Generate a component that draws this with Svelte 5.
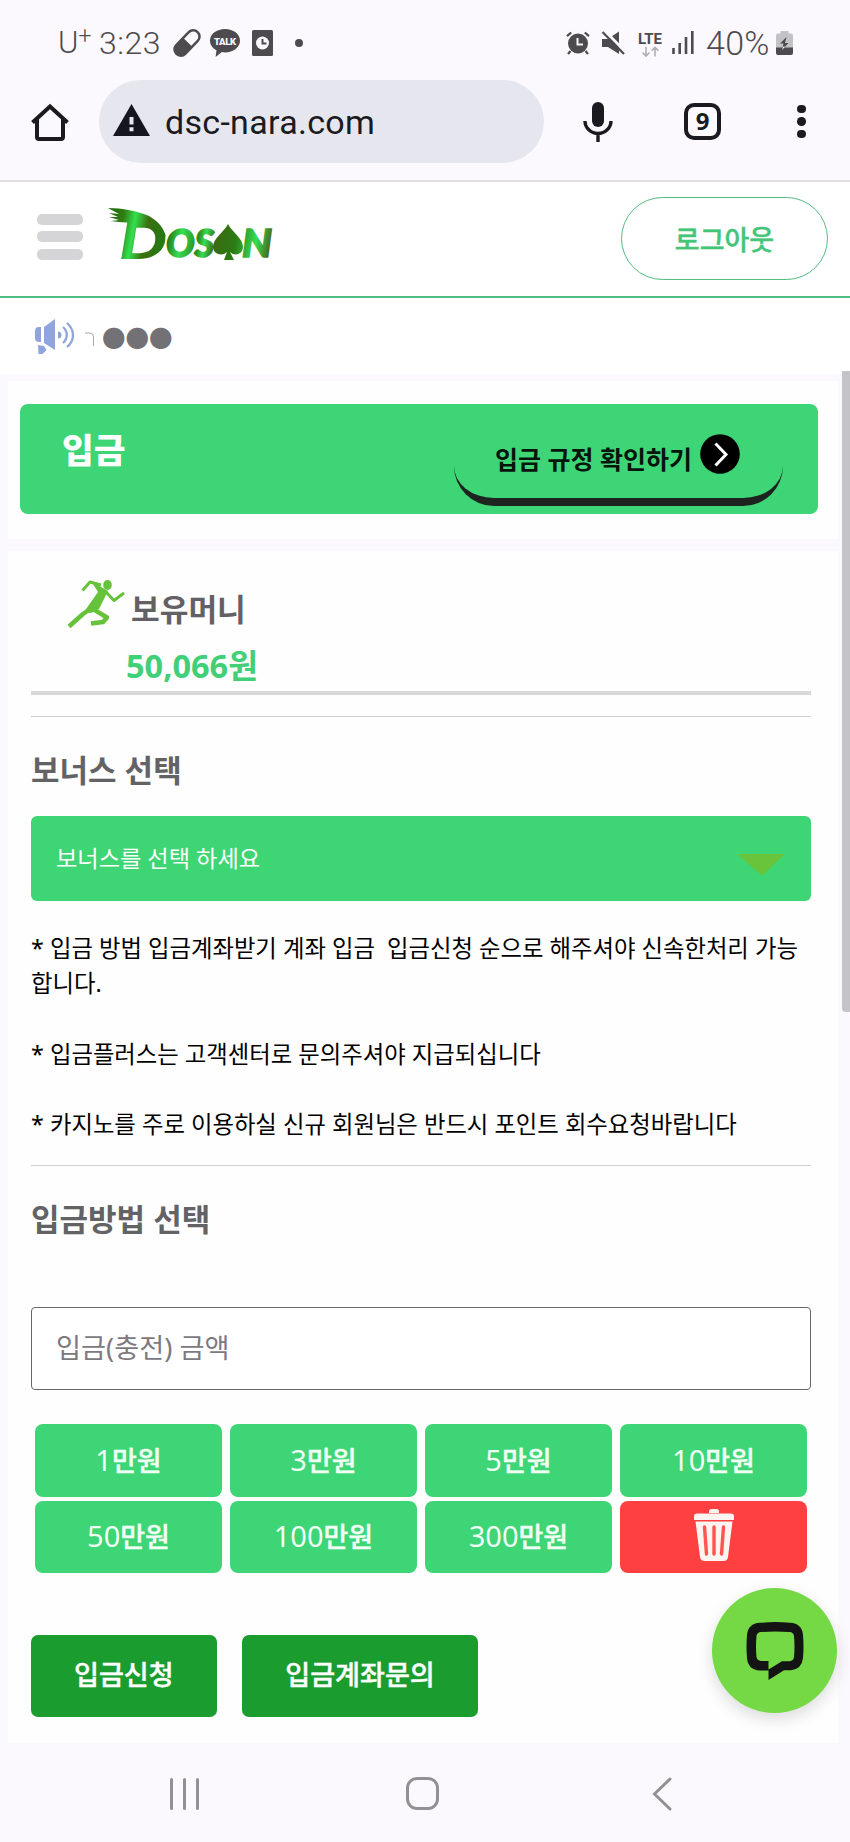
<script>
    const amounts = [
        { num: '1', unit: '만원' },
        { num: '3', unit: '만원' },
        { num: '5', unit: '만원' },
        { num: '10', unit: '만원' },
        { num: '50', unit: '만원' },
        { num: '100', unit: '만원' },
        { num: '300', unit: '만원' }
    ];

    let amount = '';
</script>

<div class="screen">
    <!-- 상태 표시줄 -->
    <div class="status-bar">
        <div class="status-left">
            <span class="carrier">U<sup>+</sup></span>
            <span class="clock">3:23</span>
            <svg class="pill" width="28" height="28" viewBox="0 0 28 28">
                <g transform="rotate(-46 14 14)">
                    <rect x="-2.500" y="6.500" width="33" height="15" rx="7.500" fill="#4d4b4e" />
                    <path d="M15 9h8a5 5 0 0 1 0 10H15z" fill="#fbf9fd" />
                </g>
            </svg>
            <svg class="talk" width="30" height="28" viewBox="0 0 30 28">
                <path
                    d="M15 0C6.700 0 0 5 0 11.700c0 4.200 2.700 7.500 6.500 9.600L5.600 28l6.300-4.900c1 .2 2 .3 3.100.3 8.300 0 15-5.100 15-11.700S23.300 0 15 0z"
                    fill="#4d4b4e"
                />
                <text x="4" y="15.600" font-size="9.500" font-weight="900" textLength="22" fill="#fbf9fd">TALK</text>
            </svg>
            <svg class="clock-card" width="21" height="26" viewBox="0 0 21 26">
                <rect width="21" height="26" rx="1.500" fill="#4d4b4e" />
                <circle cx="10.500" cy="13" r="6.500" fill="#fbf9fd" />
                <path d="M10.500 9v4.500h4" fill="none" stroke="#4d4b4e" stroke-width="2" />
            </svg>
            <i class="more-dot"></i>
        </div>
        <div class="status-right">
            <svg width="24" height="24" viewBox="0 0 24 24">
                <circle cx="12" cy="12.500" r="10" fill="#4d4b4e" />
                <path
                    d="M1 5.200L5.200 1.500M23 5.200l-4.200-3.700M4.500 20L2 23M19.500 20l2.500 3"
                    stroke="#4d4b4e"
                    stroke-width="2.200"
                />
                <path d="M11.500 7v6.500h5.500" fill="none" stroke="#fbf9fd" stroke-width="2" />
            </svg>
            <svg class="mute" width="24" height="24" viewBox="0 0 24 24">
                <path d="M1 8h6l11-7.500v22.500L7 16H1z" fill="#4d4b4e" />
                <path d="M3.500 -.5L25 21.500" stroke="#fbf9fd" stroke-width="3" />
                <path d="M1.500 1L23 23" stroke="#4d4b4e" stroke-width="2.200" />
            </svg>
            <svg class="lte" width="25" height="32" viewBox="0 -5 25 32">
                <text x="0" y="11.500" font-size="15" font-weight="700" textLength="24" fill="#4d4b4e">LTE</text>
                <path
                    d="M8 15v9M4.500 20.500L8 24l3.500-3.500M17 24.500v-9M13.500 18.800L17 15.300l3.500 3.500"
                    fill="none"
                    stroke="#b0afb2"
                    stroke-width="1.600"
                />
            </svg>
            <svg class="signal" width="22" height="23" viewBox="0 0 22 23">
                <path d="M1.500 17v6M7.700 12v11M14 6v17M20.300 0v23" stroke="#4d4b4e" stroke-width="2.600" />
            </svg>
            <span class="battery-text">40%</span>
            <svg class="battery" width="17" height="24" viewBox="0 0 17 24">
                <path d="M4.500 0h8v2.500H15a2 2 0 0 1 2 2V17H0V4.500a2 2 0 0 1 2-2h2.500z" fill="#c3c2c5" />
                <path d="M0 16.500h17V22a2 2 0 0 1-2 2H2a2 2 0 0 1-2-2z" fill="#4d4b4e" />
                <path d="M10.500 6L4 12.500h3.500L6 19l6.500-7H9z" fill="#4d4b4e" />
                <path d="M7.300 15.500L6 19l3-3.300z" fill="#fbf9fd" />
            </svg>
        </div>
    </div>

    <!-- 주소창 -->
    <div class="toolbar">
        <svg class="home" width="38" height="38" viewBox="0 0 38 38">
            <path
                d="M1.500 19.500L19 3.500l17.500 16M6 16.500V34a2 2 0 0 0 2 2h22a2 2 0 0 0 2-2V16.500"
                fill="none"
                stroke="#1b1a20"
                stroke-width="4"
            />
        </svg>
        <div class="address">
            <svg width="37" height="32" viewBox="0 0 37 32">
                <path d="M18.500 0L37 32H0z" fill="#15161f" />
                <path d="M18.500 13v7.500M18.500 23.300v4" stroke="#e6e6ee" stroke-width="4" />
            </svg>
            <span>dsc-nara.com</span>
        </div>
        <svg class="mic" width="30" height="40" viewBox="0 0 30 40">
            <rect x="9" y="0" width="12" height="25" rx="6" fill="#1b1a20" />
            <path d="M2 19a13 12.500 0 0 0 26 0M15 31v9" fill="none" stroke="#1b1a20" stroke-width="3.400" />
        </svg>
        <div class="tabs">9</div>
        <div class="menu-dots"><i></i><i></i><i></i></div>
    </div>

    <!-- 사이트 헤더 -->
    <header class="site-header">
        <div class="hamburger"><i></i><i></i><i></i></div>
        <svg class="logo" width="170" height="72" viewBox="0 -8 170 72">
            <defs>
                <linearGradient id="dosan" x1="0" y1="0" x2="166" y2="30" gradientUnits="userSpaceOnUse">
                    <stop offset="0" stop-color="#1e6b12" />
                    <stop offset="0.1" stop-color="#2f7d12" />
                    <stop offset="0.17" stop-color="#33e04e" />
                    <stop offset="0.25" stop-color="#3a7010" />
                    <stop offset="0.38" stop-color="#227a14" />
                    <stop offset="0.46" stop-color="#37dd55" />
                    <stop offset="0.56" stop-color="#2c8a1c" />
                    <stop offset="0.6" stop-color="#37dd55" />
                    <stop offset="0.66" stop-color="#3c6a12" />
                    <stop offset="0.78" stop-color="#2a7c14" />
                    <stop offset="0.9" stop-color="#37dd55" />
                    <stop offset="1" stop-color="#4a5a14" />
                </linearGradient>
            </defs>
            <g fill="url(#dosan)" font-weight="900" font-style="italic">
                <text class="logo-text" x="11" y="52" font-size="52" textLength="48" lengthAdjust="spacingAndGlyphs">D</text>
                <g stroke="url(#dosan)" stroke-width="1.600">
                    <text class="logo-text" x="58" y="49.500" font-size="38" textLength="48" lengthAdjust="spacingAndGlyphs">OS</text>
                    <text class="logo-text" x="134" y="49.500" font-size="37" textLength="30" lengthAdjust="spacingAndGlyphs">N</text>
                </g>
                <path d="M0 1c14 0 30 3 41 8 9 5 15 12 17 21-6-7-14-10-25-13-10-2-20-1-30-3l8-1-10-3 9 0-9-4 10 1z" />
                <path
                    d="M120 17c4 8 15 14 15 23 0 7-8 10-13 5l4 8h-10l3-8c-5 5-14 2-14-5 0-9 11-15 15-23z"
                />
            </g>
        </svg>
        <button class="logout">로그아웃</button>
    </header>

    <!-- 공지 -->
    <div class="notice">
        <svg width="40" height="38" viewBox="0 0 40 38" fill="#8fa5dc">
            <path d="M5 9h2v15H5a4 4 0 0 1-4-4v-7a4 4 0 0 1 4-4z" />
            <path d="M10 9l11-8v31l-11-7z" />
            <path d="M4 27l6 1 2.500 4-4 4H4.500z" />
            <path d="M24 13.500a3.500 3.500 0 0 1 0 7z" />
            <g fill="none" stroke="#8fa5dc" stroke-width="2.300">
                <path d="M29 9c5 4.500 5 11.500 0 16" />
                <path d="M33 5c8 7 8 17.500 0 24" />
            </g>
        </svg>
        <svg class="cut" width="10" height="16" viewBox="0 0 10 16">
            <path d="M0 2h5q3.500 0 3.500 4v9" fill="none" stroke="#a9a7ab" stroke-width="1" />
        </svg>
        <span class="bullets">●●●</span>
    </div>

    <main class="content">
        <section class="card banner-card">
            <div class="banner">
                <h1>입금</h1>
                <button class="rules">
                    <span>입금 규정 확인하기</span>
                    <svg width="40" height="40" viewBox="0 0 40 40">
                        <circle cx="20" cy="20" r="19.800" />
                        <path d="M15.500 9.500L26 20.500 15.500 31.500" fill="none" stroke="#fff" stroke-width="3" />
                    </svg>
                </button>
            </div>
        </section>

        <section class="card form-card">
            <div class="money">
                <svg width="58" height="48" viewBox="0 0 58 48">
                    <g fill="none" stroke="#66c23a" stroke-linejoin="round">
                        <path d="M33 5L22 2 14.500 10.500" stroke-width="3" />
                        <path d="M38 12l8 8.500L56 13" stroke-width="3" />
                        <path d="M25 27L15 34 1 46.500" stroke-width="4.500" />
                        <path d="M25 29l14 8.500-4 4.500-12 1.500" stroke-width="4.500" />
                    </g>
                    <path d="M23 1l17 10-9 18-8 4-7-1 14-20z" fill="#66c23a" />
                    <ellipse cx="39.500" cy="5" rx="4.300" ry="5" fill="#66c23a" />
                </svg>
                <strong>보유머니</strong>
            </div>
            <div class="balance">50,066원</div>
            <hr class="thick" />
            <hr />

            <h2 class="bonus-title">보너스 선택</h2>
            <div class="select">
                <span>보너스를 선택 하세요</span>
                <svg width="48" height="21" viewBox="0 0 48 21">
                    <path d="M0 0h48L28 19q-3 3-6 0z" fill="#69c33b" />
                </svg>
            </div>

            <p class="guide">
                * 입금 방법 입금계좌받기 계좌 입금&nbsp; 입금신청 순으로 해주셔야 신속한처리 가능합니다.<br /><br />
                * 입금플러스는 고객센터로 문의주셔야 지급되십니다<br /><br />
                * 카지노를 주로 이용하실 신규 회원님은 반드시 포인트 회수요청바랍니다
            </p>
            <hr class="guide-line" />

            <h2 class="method-title">입금방법 선택</h2>
            <input class="amount" placeholder="입금(충전) 금액" bind:value={amount} />

            <div class="quick">
                {#each amounts as item}
                    <button><span>{item.num}</span>{item.unit}</button>
                {/each}
                <button class="clear" aria-label="삭제">
                    <svg width="42" height="52" viewBox="0 0 42 52" fill="#fdf3f1">
                        <path d="M16 4V2.500Q16 0 18.500 0h5Q26 0 26 2.500V4z" />
                        <path d="M4 4.500h34q3 0 3 3V11H1V7.500q0-3 3-3z" />
                        <path d="M2.500 12.500h37L35 48q-.5 4-4.500 4h-19Q7.500 52 7 48z" />
                        <path
                            d="M11.500 18l2 27M21 18v27M30.500 18l-2 27"
                            stroke="#ff5450"
                            stroke-width="3.400"
                            stroke-linecap="round"
                        />
                    </svg>
                </button>
            </div>

            <div class="actions">
                <button>입금신청</button>
                <button>입금계좌문의</button>
            </div>
        </section>
    </main>

    <!-- 하단 내비게이션 -->
    <nav class="nav-bar">
        <svg width="31" height="32" viewBox="0 0 31 32">
            <path d="M2.500 1.500v29M15.500 1.500v29M28.500 1.500v29" />
        </svg>
        <svg class="nav-home" width="33" height="33" viewBox="0 0 33 33">
            <rect x="1.500" y="1.500" width="30" height="30" rx="9.500" />
        </svg>
        <svg width="20" height="34" viewBox="0 0 20 34">
            <path d="M18 2L2.500 17 18 32" />
        </svg>
    </nav>

    <div class="scrollbar"></div>
    <button class="chat" aria-label="채팅">
        <svg width="58" height="58" viewBox="0 0 58 58">
            <path
                fill-rule="evenodd"
                d="M14 .8Q29-.6 44 .8 56 1.500 57 13q1 12 0 23-1.200 11-12 12.200H38L22.500 58V48.500H14Q2 48 1 36q-1-11 0-23Q2 1.500 14 .8zM15 10q-4 .3-4.500 4-1 11 0 21 .5 3.500 4.500 4h7.500v8.500L36 39.200h7.500q4-.4 4.500-4.200 1-10 0-21-.5-3.700-4.500-4-14-1-28.500 0z"
                fill="#141414"
            />
        </svg>
    </button>
</div>

<style>
    :global(body) {
        margin: 0;
        background: #fbf9fd;
    }

    .screen {
        position: relative;
        width: 850px;
        height: 1842px;
        overflow: hidden;
        background: #fbf9fd;
        font-family: 'Noto Sans', 'Noto Sans CJK KR', sans-serif;
        color: #000;
    }

    button {
        border: 0;
        padding: 0;
        background: none;
        font-family: inherit;
    }

    svg {
        display: block;
        flex-shrink: 0;
        overflow: visible;
    }

    /* 상태 표시줄 */
    .status-bar {
        display: flex;
        justify-content: space-between;
        height: 80px;
        padding: 5px 57px 0 58px;
        box-sizing: border-box;
        font-family: Roboto, sans-serif;
        font-weight: 300;
        font-size: 31px;
        color: #4d4b4e;
    }

    .status-left,
    .status-right {
        display: flex;
        align-items: center;
    }

    .carrier {
        width: 41px;
        line-height: 36px;
    }

    .carrier sup {
        font-size: 23px;
        line-height: 0;
        vertical-align: 9px;
    }

    .clock {
        width: 63px;
        font-size: 32px;
        letter-spacing: 0.5px;
    }

    .pill {
        margin-left: 11px;
    }

    .talk {
        margin-left: 9px;
    }

    .clock-card {
        margin-left: 12px;
    }

    .more-dot {
        width: 8px;
        height: 8px;
        margin-left: 22px;
        border-radius: 50%;
        background: #4d4b4e;
    }

    .mute {
        margin-left: 11px;
    }

    .lte {
        margin-left: 13px;
    }

    .signal {
        margin-left: 9px;
    }

    .battery-text {
        width: 66px;
        margin-left: 12px;
        font-size: 34px;
        letter-spacing: 0.3px;
    }

    .battery {
        margin-left: 4px;
    }

    /* 주소창 */
    .toolbar {
        display: flex;
        align-items: center;
        height: 102px;
        padding: 1px 0 18px 31px;
        box-sizing: border-box;
        border-bottom: 2px solid #e1dfe3;
    }

    .address {
        display: flex;
        align-items: center;
        width: 445px;
        height: 83px;
        margin-left: 30px;
        padding-left: 14px;
        box-sizing: border-box;
        border-radius: 42px;
        background: #e6e6ee;
        font-family: Roboto, sans-serif;
        font-size: 34px;
        letter-spacing: 0.3px;
        color: #1b1a20;
    }

    .address svg {
        margin-top: -4px;
    }

    .address span {
        margin-left: 15px;
    }

    .mic {
        margin-left: 39px;
    }

    .tabs {
        width: 37px;
        height: 37px;
        margin-left: 71px;
        box-sizing: border-box;
        border: 4px solid #1b1a20;
        border-radius: 10px;
        font: 700 24px/28px 'Noto Sans', sans-serif;
        text-align: center;
        color: #1b1a20;
    }

    .menu-dots {
        display: flex;
        flex-direction: column;
        gap: 4px;
        margin-left: 76px;
    }

    .menu-dots i {
        width: 8.500px;
        height: 8.500px;
        border-radius: 50%;
        background: #1b1a20;
    }

    /* 사이트 헤더 */
    .site-header {
        display: flex;
        align-items: center;
        height: 116px;
        padding: 0 22px 2px 37px;
        box-sizing: border-box;
        border-bottom: 2px solid #52bd80;
        background: #fff;
    }

    .hamburger {
        display: flex;
        flex-direction: column;
        gap: 6.500px;
        margin-bottom: 3px;
    }

    .hamburger i {
        width: 46px;
        height: 11px;
        border-radius: 5px;
        background: #d5d4d7;
    }

    .logo {
        margin: 0 auto 7px 25px;
    }

    .logo-text {
        font-family: Lato, sans-serif;
    }

    .logout {
        width: 207px;
        height: 83px;
        border: 1.500px solid #52bd80;
        border-radius: 42px;
        font-size: 27px;
        font-weight: 500;
        -webkit-text-stroke: 0.4px #45c578;
        color: #45c578;
    }

    /* 공지 */
    .notice {
        display: flex;
        align-items: center;
        height: 76px;
        padding: 2px 0 0 34px;
        box-sizing: border-box;
        background: #fff;
    }

    .cut {
        margin: 3px 0 0 11px;
    }

    .bullets {
        margin-left: 7px;
        font-family: 'Noto Sans CJK KR', sans-serif;
        font-size: 23.500px;
        color: #727176;
    }

    /* 본문 */
    .content {
        height: 1369px;
        padding: 7px 12px 0 8px;
        box-sizing: border-box;
    }

    .card {
        background: #fefefe;
    }

    .banner-card {
        height: 158px;
        padding: 23px 20px 0 12px;
        box-sizing: border-box;
    }

    .banner {
        display: flex;
        justify-content: space-between;
        height: 110px;
        padding: 22px 35px 8px 42px;
        box-sizing: border-box;
        border-radius: 8px;
        background: #3dd575;
    }

    .banner h1 {
        margin: 0;
        font-size: 34.500px;
        font-weight: 900;
        line-height: 48px;
        color: #fff;
    }

    .rules {
        display: flex;
        align-items: center;
        gap: 8px;
        width: 329px;
        height: 80px;
        padding: 0 41px 16px;
        box-sizing: border-box;
        border-bottom: 8px solid #1f2320;
        border-radius: 42px;
        font-size: 25px;
        font-weight: 700;
        white-space: nowrap;
        color: #06150b;
    }

    .rules span {
        margin-top: 7px;
    }

    .form-card {
        height: 1192px;
        margin-top: 12px;
        padding: 29px 27px 0 23px;
        box-sizing: border-box;
    }

    .money {
        display: flex;
        height: 60px;
        padding-left: 37px;
        font-size: 31.200px;
        line-height: 58px;
        color: #636166;
    }

    .money strong {
        margin-left: 5px;
    }

    .balance {
        height: 51px;
        padding-left: 95px;
        font-size: 32.500px;
        font-weight: 700;
        line-height: 52px;
        color: #41cf78;
    }

    hr {
        height: 1px;
        margin: 0;
        border: 0;
        background: #cfced2;
    }

    .thick {
        height: 4px;
        margin-bottom: 21px;
        background: #d8d7da;
    }

    h2 {
        margin: 0;
        font-size: 31px;
        font-weight: 700;
        line-height: 50px;
        color: #636365;
    }

    .bonus-title {
        margin-top: 28px;
    }

    .select {
        display: flex;
        align-items: center;
        justify-content: space-between;
        height: 85px;
        margin-top: 21px;
        padding: 0 26px 0 25px;
        box-sizing: border-box;
        border-radius: 6px;
        background: #3ed674;
        font-size: 23.200px;
        color: #fff;
    }

    .select span {
        margin-bottom: 4px;
    }

    .select svg {
        margin-top: 12px;
    }

    .guide {
        margin: 30px 0 0;
        font-size: 23.350px;
        line-height: 35.200px;
        word-break: break-all;
    }

    .guide-line {
        margin-top: 23px;
    }

    .method-title {
        margin-top: 28px;
    }

    .amount {
        display: block;
        width: 100%;
        height: 83px;
        margin-top: 63px;
        padding: 0 24px 2px;
        box-sizing: border-box;
        border: 1px solid #67666a;
        border-radius: 4px;
        background: #fff;
        font-family: inherit;
        font-size: 27.200px;
    }

    .amount::placeholder {
        color: #7c7a7e;
    }

    .quick {
        display: grid;
        grid-template-columns: repeat(4, 1fr);
        gap: 4px 8px;
        margin: 34px 4px 0;
    }

    .quick button {
        height: 72.500px;
        padding-bottom: 2px;
        border-radius: 8px;
        background: #3dd575;
        font-size: 27px;
        font-weight: 500;
        -webkit-text-stroke: 0.4px #f0fff4;
        color: #f0fff4;
    }

    .quick span {
        font-size: 29px;
        font-weight: 400;
        -webkit-text-stroke: 0;
    }

    .quick .clear {
        display: flex;
        justify-content: center;
        padding-top: 8px;
        background: #ff4041;
    }

    .actions {
        display: flex;
        gap: 25.500px;
        margin-top: 62px;
    }

    .actions button {
        height: 82px;
        padding: 0 43px 5px;
        border-radius: 7px;
        background: #1a9c2f;
        font-size: 27.100px;
        font-weight: 500;
        -webkit-text-stroke: 0.4px #fff;
        color: #fff;
    }

    /* 하단 내비게이션 */
    .nav-bar {
        display: flex;
        align-items: center;
        justify-content: space-between;
        height: 99px;
        padding: 2px 178px 0 169px;
        box-sizing: border-box;
    }

    .nav-home {
        margin-right: 7px;
    }

    .nav-bar svg {
        fill: none;
        stroke: #929093;
        stroke-width: 3;
        stroke-linecap: round;
    }

    .scrollbar {
        position: absolute;
        top: 371px;
        right: 0;
        width: 8.500px;
        height: 641px;
        border-radius: 0 0 0 4px;
        background: #c4c4c8;
    }

    .chat {
        position: absolute;
        top: 1588px;
        left: 712px;
        display: flex;
        align-items: center;
        justify-content: center;
        width: 125px;
        height: 125px;
        border-radius: 50%;
        background: #74d944;
        box-shadow: 0 6px 16px rgba(0, 0, 0, 0.14);
    }
</style>
